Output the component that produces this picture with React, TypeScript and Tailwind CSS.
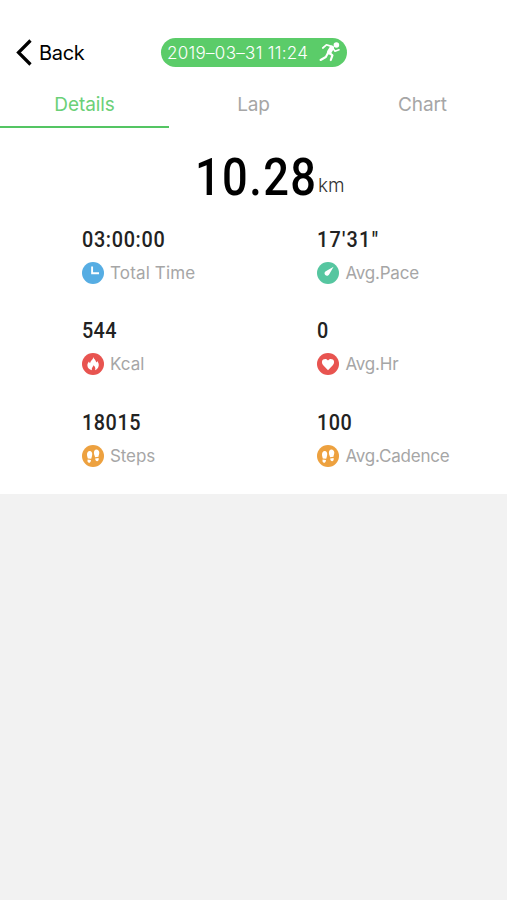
import { useState, type ReactNode } from "react";
import clsx from "clsx";

const tabs = ["Details", "Lap", "Chart"];

function RunnerIcon() {
  return (
    <svg width="22" height="20" viewBox="0 0 22 20" fill="none" stroke="white" strokeLinecap="round" strokeLinejoin="round">
      <circle cx="17.4" cy="3" r="2.8" fill="white" stroke="none" />
      <path d="M3.8 6 L7.4 2.8 L12.4 4.4" strokeWidth="1.7" />
      <path d="M12.8 5.8 L10.2 10.2" strokeWidth="4.6" />
      <path d="M14.2 6.6 L16 9.2 L20 7.8" strokeWidth="1.6" />
      <path d="M10.4 10.8 L13.4 13.4 L11.8 18" strokeWidth="2.2" />
      <path d="M8.8 11.2 L6.8 15 L1.6 18" strokeWidth="2.1" />
    </svg>
  );
}

function Badge({ color, children }: { color: string; children: ReactNode }) {
  return (
    <svg width="22" height="22" viewBox="0 0 22 22" className="shrink-0">
      <circle cx="11" cy="11" r="11" fill={color} />
      {children}
    </svg>
  );
}

function ClockIcon() {
  return (
    <Badge color="#56ade3">
      <path d="M10.1 4.6 V11.2 H17" fill="none" stroke="white" strokeWidth="1.9" />
    </Badge>
  );
}

function PaceIcon() {
  return (
    <Badge color="#56c6a0">
      <path d="M16.6 4.8 L12.4 12 A2.5 2.5 0 1 1 9.2 8.9 Z" fill="white" />
    </Badge>
  );
}

function FlameIcon() {
  return (
    <Badge color="#e85450">
      <path
        d="M11.2 4 C11.9 6 13.9 7.2 14.3 9.4 C14.9 9 15.1 8.5 15.2 8 C16.4 9.5 17 11 16.7 12.8 C16.4 15 15 16.6 13 17.2 C13.9 15.3 13 13.6 11.5 12.2 C11.3 13.6 9.4 14.6 9.8 17.3 C7.3 16.6 5.5 14.9 5.4 12.5 C5.3 10.8 6.2 9.6 7 8.5 C7.2 9.3 7.5 9.8 8.1 10.3 C8.4 7.6 11.3 6.6 11.2 4 Z"
        fill="white"
      />
    </Badge>
  );
}

function HeartIcon() {
  return (
    <Badge color="#e85450">
      <path
        d="M11 17.2 L6 11.9 C4.5 10.2 4.6 7.8 6.1 6.6 C7.8 5.4 10.1 5.8 11 7.6 C11.9 5.8 14.2 5.4 15.9 6.6 C17.4 7.8 17.5 10.2 16 11.9 Z"
        fill="white"
      />
    </Badge>
  );
}

function StepsIcon() {
  return (
    <Badge color="#eda13f">
      <g fill="white">
        <path d="M7.6 6 C9.6 5.9 10.4 7.7 10.2 9.8 C10.1 11.3 9.6 12.6 9.2 13.8 L5.8 13.4 C5.6 12 4.9 10.8 5 9.2 C5.1 7.4 6.1 6.1 7.6 6 Z" />
        <path d="M5.6 14.6 L9 15 C8.9 17 8 18 6.8 17.8 C5.6 17.6 5.3 16.2 5.6 14.6 Z" />
        <path d="M14.4 4.4 C16.1 4.4 17.3 5.8 17.3 7.6 C17.3 9.2 16.5 10.4 16.5 11.8 L13.1 12.2 C12.8 10.9 12 9.7 11.9 8 C11.8 5.9 12.8 4.4 14.4 4.4 Z" />
        <path d="M13.2 13.4 L16.6 13 C16.9 14.7 16.5 16 15.3 16.2 C14.1 16.3 13.3 15.2 13.2 13.4 Z" />
      </g>
    </Badge>
  );
}

const stats = [
  { value: "03:00:00", label: "Total Time", icon: <ClockIcon />, tracking: "tracking-[0.75px]", labelTracking: "tracking-[0.15px]" },
  { value: "17'31\"", label: "Avg.Pace", icon: <PaceIcon />, tracking: "tracking-[1.4px]", labelTracking: "tracking-[-0.2px]" },
  { value: "544", label: "Kcal", icon: <FlameIcon />, tracking: "tracking-[0.4px]", labelTracking: "tracking-[0px]" },
  { value: "0", label: "Avg.Hr", icon: <HeartIcon />, tracking: "tracking-[0.75px]", labelTracking: "tracking-[-0.2px]" },
  { value: "18015", label: "Steps", icon: <StepsIcon />, tracking: "tracking-[0.6px]", labelTracking: "tracking-[-0.1px]" },
  { value: "100", label: "Avg.Cadence", icon: <StepsIcon />, tracking: "tracking-[0.5px]", labelTracking: "tracking-[-0.2px]" },
];

export default function App() {
  const [active, setActive] = useState("Details");

  return (
    <div className="min-h-screen bg-[#f2f2f2] font-['Inter',sans-serif]">
      <div className="h-[494px] bg-white pt-[37px]">
        {/* Header */}
        <header className="flex h-[30px] items-center pl-4">
          <button className="flex w-[145px] items-center text-xl leading-[30px] tracking-[-0.3px] text-black">
            <svg width="17" height="28" viewBox="0 0 17 28" fill="none" className="mr-1.5">
              <path d="M14.5 2.5 L2.5 14.5 L14.5 26.5" stroke="black" strokeWidth="3.2" />
            </svg>
            <span className="pt-px">Back</span>
          </button>
          <div className="flex h-[29px] w-[186px] items-center justify-between rounded-full bg-[#5bcc69] pr-1.5 pl-1.5 text-[17px] font-light tracking-[0.3px] text-white">
            <span className="pt-[3px]">2019–03–31 11:24</span>
            <RunnerIcon />
          </div>
        </header>

        {/* Tabs */}
        <nav className="mt-[13px] grid grid-cols-3">
          {tabs.map((tab) => (
            <button
              key={tab}
              onClick={() => setActive(tab)}
              className={clsx(
                "h-[47.5px] border-b-2 pt-1 text-[19px] tracking-[-0.1px]",
                active === tab ? "border-[#54c563] text-[#6bd078]" : "border-transparent text-[#a6a6a6]"
              )}
            >
              {tab}
            </button>
          ))}
        </nav>

        {/* Distance */}
        <div className="mt-[20.5px] flex h-[60px] items-baseline pl-[194.5px] text-black">
          <span className="w-[123.5px] origin-left scale-x-[0.87] font-['Roboto',sans-serif] text-[52px] leading-[60px] font-medium tracking-[1.6px]">
            10.28
          </span>
          <span className="relative -top-[3px] text-[19px] font-light text-[#333]">km</span>
        </div>

        {/* Stats */}
        <div className="mt-[17.5px] grid grid-cols-[235.4px_1fr] gap-y-[30px] pl-[82px]">
          {stats.map((s) => (
            <div key={s.label} className="h-[61.5px]">
              <div
                className={clsx(
                  "w-fit origin-left scale-x-90 font-['Roboto',sans-serif] text-[22px] leading-[28px] font-medium text-[#222]",
                  s.tracking
                )}
              >
                {s.value}
              </div>
              <div className="mt-[8px] flex h-[22px] items-center">
                {s.icon}
                <span className={clsx("ml-1.5 pt-0.5 text-[17px] text-[#a6a6a6]", s.labelTracking)}>{s.label}</span>
              </div>
            </div>
          ))}
        </div>
      </div>
    </div>
  );
}
